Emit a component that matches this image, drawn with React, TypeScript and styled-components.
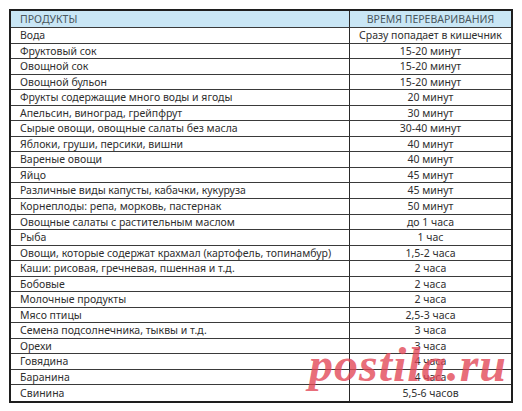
import React from 'react';
import styled, { createGlobalStyle } from 'styled-components';

interface IRow {
  product: string;
  time: string;
}

const rows: IRow[] = [
  { product: 'Вода', time: 'Сразу попадает в кишечник' },
  { product: 'Фруктовый сок', time: '15-20 минут' },
  { product: 'Овощной сок', time: '15-20 минут' },
  { product: 'Овощной бульон', time: '15-20 минут' },
  { product: 'Фрукты содержащие много воды и ягоды', time: '20 минут' },
  { product: 'Апельсин, виноград, грейпфрут', time: '30 минут' },
  { product: 'Сырые овощи, овощные салаты без масла', time: '30-40 минут' },
  { product: 'Яблоки, груши, персики, вишни', time: '40 минут' },
  { product: 'Вареные овощи', time: '40 минут' },
  { product: 'Яйцо', time: '45 минут' },
  { product: 'Различные виды капусты, кабачки, кукуруза', time: '45 минут' },
  { product: 'Корнеплоды: репа, морковь, пастернак', time: '50 минут' },
  { product: 'Овощные салаты с растительным маслом', time: 'до 1 часа' },
  { product: 'Рыба', time: '1 час' },
  { product: 'Овощи, которые содержат крахмал (картофель, топинамбур)', time: '1,5-2 часа' },
  { product: 'Каши: рисовая, гречневая, пшенная и т.д.', time: '2 часа' },
  { product: 'Бобовые', time: '2 часа' },
  { product: 'Молочные продукты', time: '2 часа' },
  { product: 'Мясо птицы', time: '2,5-3 часа' },
  { product: 'Семена подсолнечника, тыквы и т.д.', time: '3 часа' },
  { product: 'Орехи', time: '3 часа' },
  { product: 'Говядина', time: '4 часа' },
  { product: 'Баранина', time: '4 часа' },
  { product: 'Свинина', time: '5,5-6 часов' },
];

const GlobalStyle = createGlobalStyle`
  body {
    margin: 0;
    background: #fff;
    font-family: 'Noto Sans', 'Open Sans', sans-serif;
  }
`;

const Page = styled.div`
  position: relative;
  width: 522px;
  height: 411px;
  padding: 9px 0 0 9px;
  box-sizing: border-box;
  overflow: hidden;
`;

const Table = styled.div`
  width: 504px;
  height: 394px;
  box-sizing: border-box;
  border: 2px solid #1e1e1e;
  display: grid;
  grid-template-columns: 338px 1fr;
  grid-template-rows: 17px repeat(24, 1fr);
`;

const Cell = styled.div<{ $head?: boolean; $center?: boolean; $last?: boolean }>`
  display: flex;
  align-items: center;
  justify-content: ${({ $center }) => ($center ? 'center' : 'flex-start')};
  padding-left: ${({ $center }) => ($center ? '0' : '9px')};
  background: ${({ $head }) => ($head ? '#c9e6f5' : '#fff')};
  border-bottom: ${({ $last }) => ($last ? 'none' : '1px solid #3a3a3a')};
  border-left: ${({ $center }) => ($center ? '1px solid #2a2a2a' : 'none')};
  color: ${({ $head }) => ($head ? '#4a5860' : '#2f2f2f')};
  font-size: 10.5px;
  line-height: 1;
  white-space: nowrap;
  overflow: hidden;
`;

const Watermark = styled.div`
  position: absolute;
  left: 309px;
  top: 341px;
  font-family: 'Liberation Serif', serif;
  font-weight: bold;
  font-style: italic;
  font-size: 48px;
  line-height: 1;
  color: rgba(226, 70, 86, 0.78);
  letter-spacing: 1px;
  pointer-events: none;
`;

const App = () => {
  return (
    <>
      <GlobalStyle />
      <Page>
        <Table>
          <Cell $head>ПРОДУКТЫ</Cell>
          <Cell $head $center>ВРЕМЯ ПЕРЕВАРИВАНИЯ</Cell>
          {rows.map((row, i) => (
            <React.Fragment key={i}>
              <Cell $last={i === rows.length - 1}>{row.product}</Cell>
              <Cell $center $last={i === rows.length - 1}>{row.time}</Cell>
            </React.Fragment>
          ))}
        </Table>
        <Watermark>postila.ru</Watermark>
      </Page>
    </>
  );
};

export default App;
